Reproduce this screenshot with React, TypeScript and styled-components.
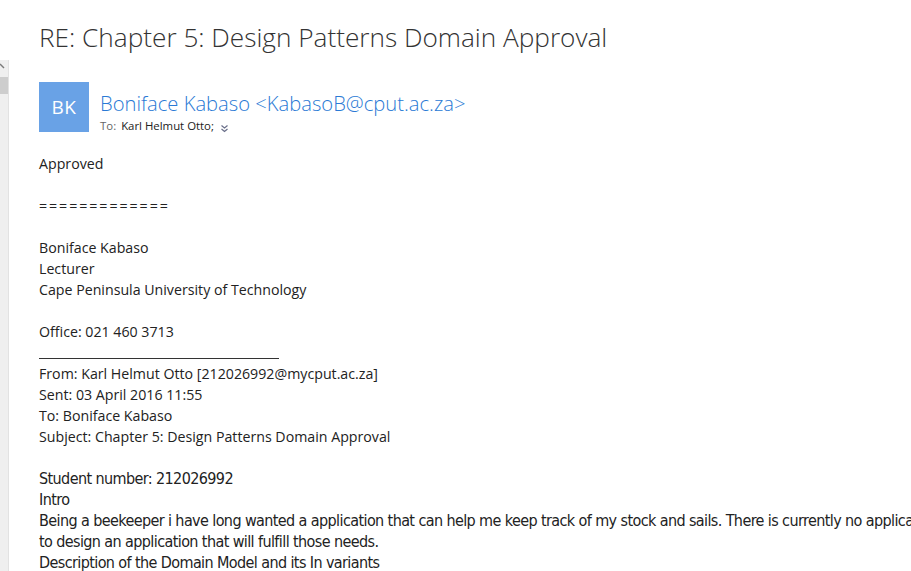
import React from "react";
import styled, { createGlobalStyle } from "styled-components";

const Global = createGlobalStyle`
  html, body { margin: 0; padding: 0; background: #ffffff; }
  body { width: 911px; height: 571px; overflow: hidden; }
`;

const Page = styled.div`
  display: flex;
  flex-direction: column;
  width: 911px;
  height: 571px;
  overflow: hidden;
  font-family: "Open Sans", "Noto Sans", sans-serif;
  color: #333333;
`;

const Title = styled.h1`
  margin: 0;
  height: 60px;
  box-sizing: border-box;
  padding: 19px 0 0 39px;
  font-family: "Open Sans", "Noto Sans", sans-serif;
  font-weight: 300;
  font-size: 26.2px;
  line-height: 36px;
  color: #333333;
  white-space: nowrap;
`;

const Body = styled.div`
  display: flex;
  flex: 1;
  min-height: 0;
`;

const ScrollStrip = styled.div`
  position: relative;
  width: 8px;
  flex: none;
  background: #efefef;
  border-right: 1px solid #e2e2e2;
`;

const ScrollArrow = styled.svg`
  position: absolute;
  left: 0;
  top: 3px;
`;

const ScrollThumb = styled.div`
  position: absolute;
  left: 0;
  top: 17px;
  width: 8px;
  height: 17px;
  background: #cdcdcd;
`;

const Content = styled.div`
  flex: 1;
  padding: 22px 0 0 30px;
  min-width: 0;
  overflow: hidden;
`;

const Header = styled.div`
  display: flex;
  align-items: flex-start;
  gap: 11px;
`;

const Avatar = styled.div`
  width: 50px;
  height: 50px;
  flex: none;
  background: #69a2e6;
  color: #ffffff;
  display: flex;
  align-items: center;
  justify-content: center;
  font-family: "Open Sans", "Noto Sans", sans-serif;
  font-size: 19px;
  font-weight: 400;
  letter-spacing: 0.5px;
`;

const HeaderText = styled.div`
  display: flex;
  flex-direction: column;
  padding-top: 7px;
`;

const Sender = styled.div`
  font-family: "Open Sans", "Noto Sans", sans-serif;
  font-weight: 300;
  font-size: 20.2px;
  line-height: 28px;
  color: #2a7ad5;
  white-space: nowrap;
`;

const Recipients = styled.div`
  display: flex;
  align-items: center;
  font-size: 11.4px;
  line-height: 16px;
  margin-top: 1px;
  white-space: nowrap;
`;

const ToLabel = styled.span`
  color: #666666;
  margin-right: 5px;
`;

const ToName = styled.span`
  color: #222222;
`;

const Expand = styled.svg`
  margin-left: 6px;
  margin-top: 4px;
`;

const Message = styled.div`
  padding-top: 19px;
  font-family: "Open Sans", "Noto Sans", sans-serif;
  font-size: 14.2px;
  line-height: 21px;
  color: #222222;
`;

const Line = styled.div<{ $spread?: boolean }>`
  white-space: nowrap;
  min-height: 21px;
  letter-spacing: ${(p) => (p.$spread ? "1.95px" : "normal")};
`;

const Rule = styled.div`
  width: 240px;
  height: 17px;
  margin-bottom: 4px;
  box-sizing: border-box;
  border-bottom: 1px solid #333333;
`;

const Narrow = styled.div`
  font-family: "Liberation Sans Narrow", "DejaVu Sans Condensed", "Roboto Condensed", "Liberation Sans", sans-serif;
  font-stretch: condensed;
  font-size: 16px;
  line-height: 21px;
  letter-spacing: -0.6px;
  color: #222222;
  white-space: nowrap;
`;

export default function App() {
  return (
    <Page>
      <Global />
      <Title>RE: Chapter 5: Design Patterns Domain Approval</Title>
      <Body>
        <ScrollStrip>
          <ScrollArrow width="6" height="6" viewBox="0 0 6 6">
            <path d="M0 1 L4 5" stroke="#7a7a7a" strokeWidth="1.4" fill="none" />
          </ScrollArrow>
          <ScrollThumb />
        </ScrollStrip>
        <Content>
          <Header>
            <Avatar>BK</Avatar>
            <HeaderText>
              <Sender>Boniface Kabaso &lt;KabasoB@cput.ac.za&gt;</Sender>
              <Recipients>
                <ToLabel>To:</ToLabel>
                <ToName>Karl Helmut Otto;</ToName>
                <Expand width="9" height="9" viewBox="0 0 9 9">
                  <path d="M1.5 1.5 L4.5 4 L7.5 1.5 M1.5 5 L4.5 7.5 L7.5 5" stroke="#6a6f8a" strokeWidth="1.2" fill="none" />
                </Expand>
              </Recipients>
            </HeaderText>
          </Header>
          <Message>
            <Line>Approved</Line>
            <Line />
            <Line $spread>=============</Line>
            <Line />
            <Line>Boniface Kabaso</Line>
            <Line>Lecturer</Line>
            <Line>Cape Peninsula University of Technology</Line>
            <Line />
            <Line>Office: 021 460 3713</Line>
            <Rule />
            <Line>From: Karl Helmut Otto [212026992@mycput.ac.za]</Line>
            <Line>Sent: 03 April 2016 11:55</Line>
            <Line>To: Boniface Kabaso</Line>
            <Line>Subject: Chapter 5: Design Patterns Domain Approval</Line>
            <Line />
            <Narrow>Student number: 212026992</Narrow>
            <Narrow>Intro</Narrow>
            <Narrow>Being a beekeeper i have long wanted a application that can help me keep track of my stock and sails. There is currently no application on the market that does this so i decided</Narrow>
            <Narrow>to design an application that will fulfill those needs.</Narrow>
            <Narrow>Description of the Domain Model and its In variants</Narrow>
          </Message>
        </Content>
      </Body>
    </Page>
  );
}
